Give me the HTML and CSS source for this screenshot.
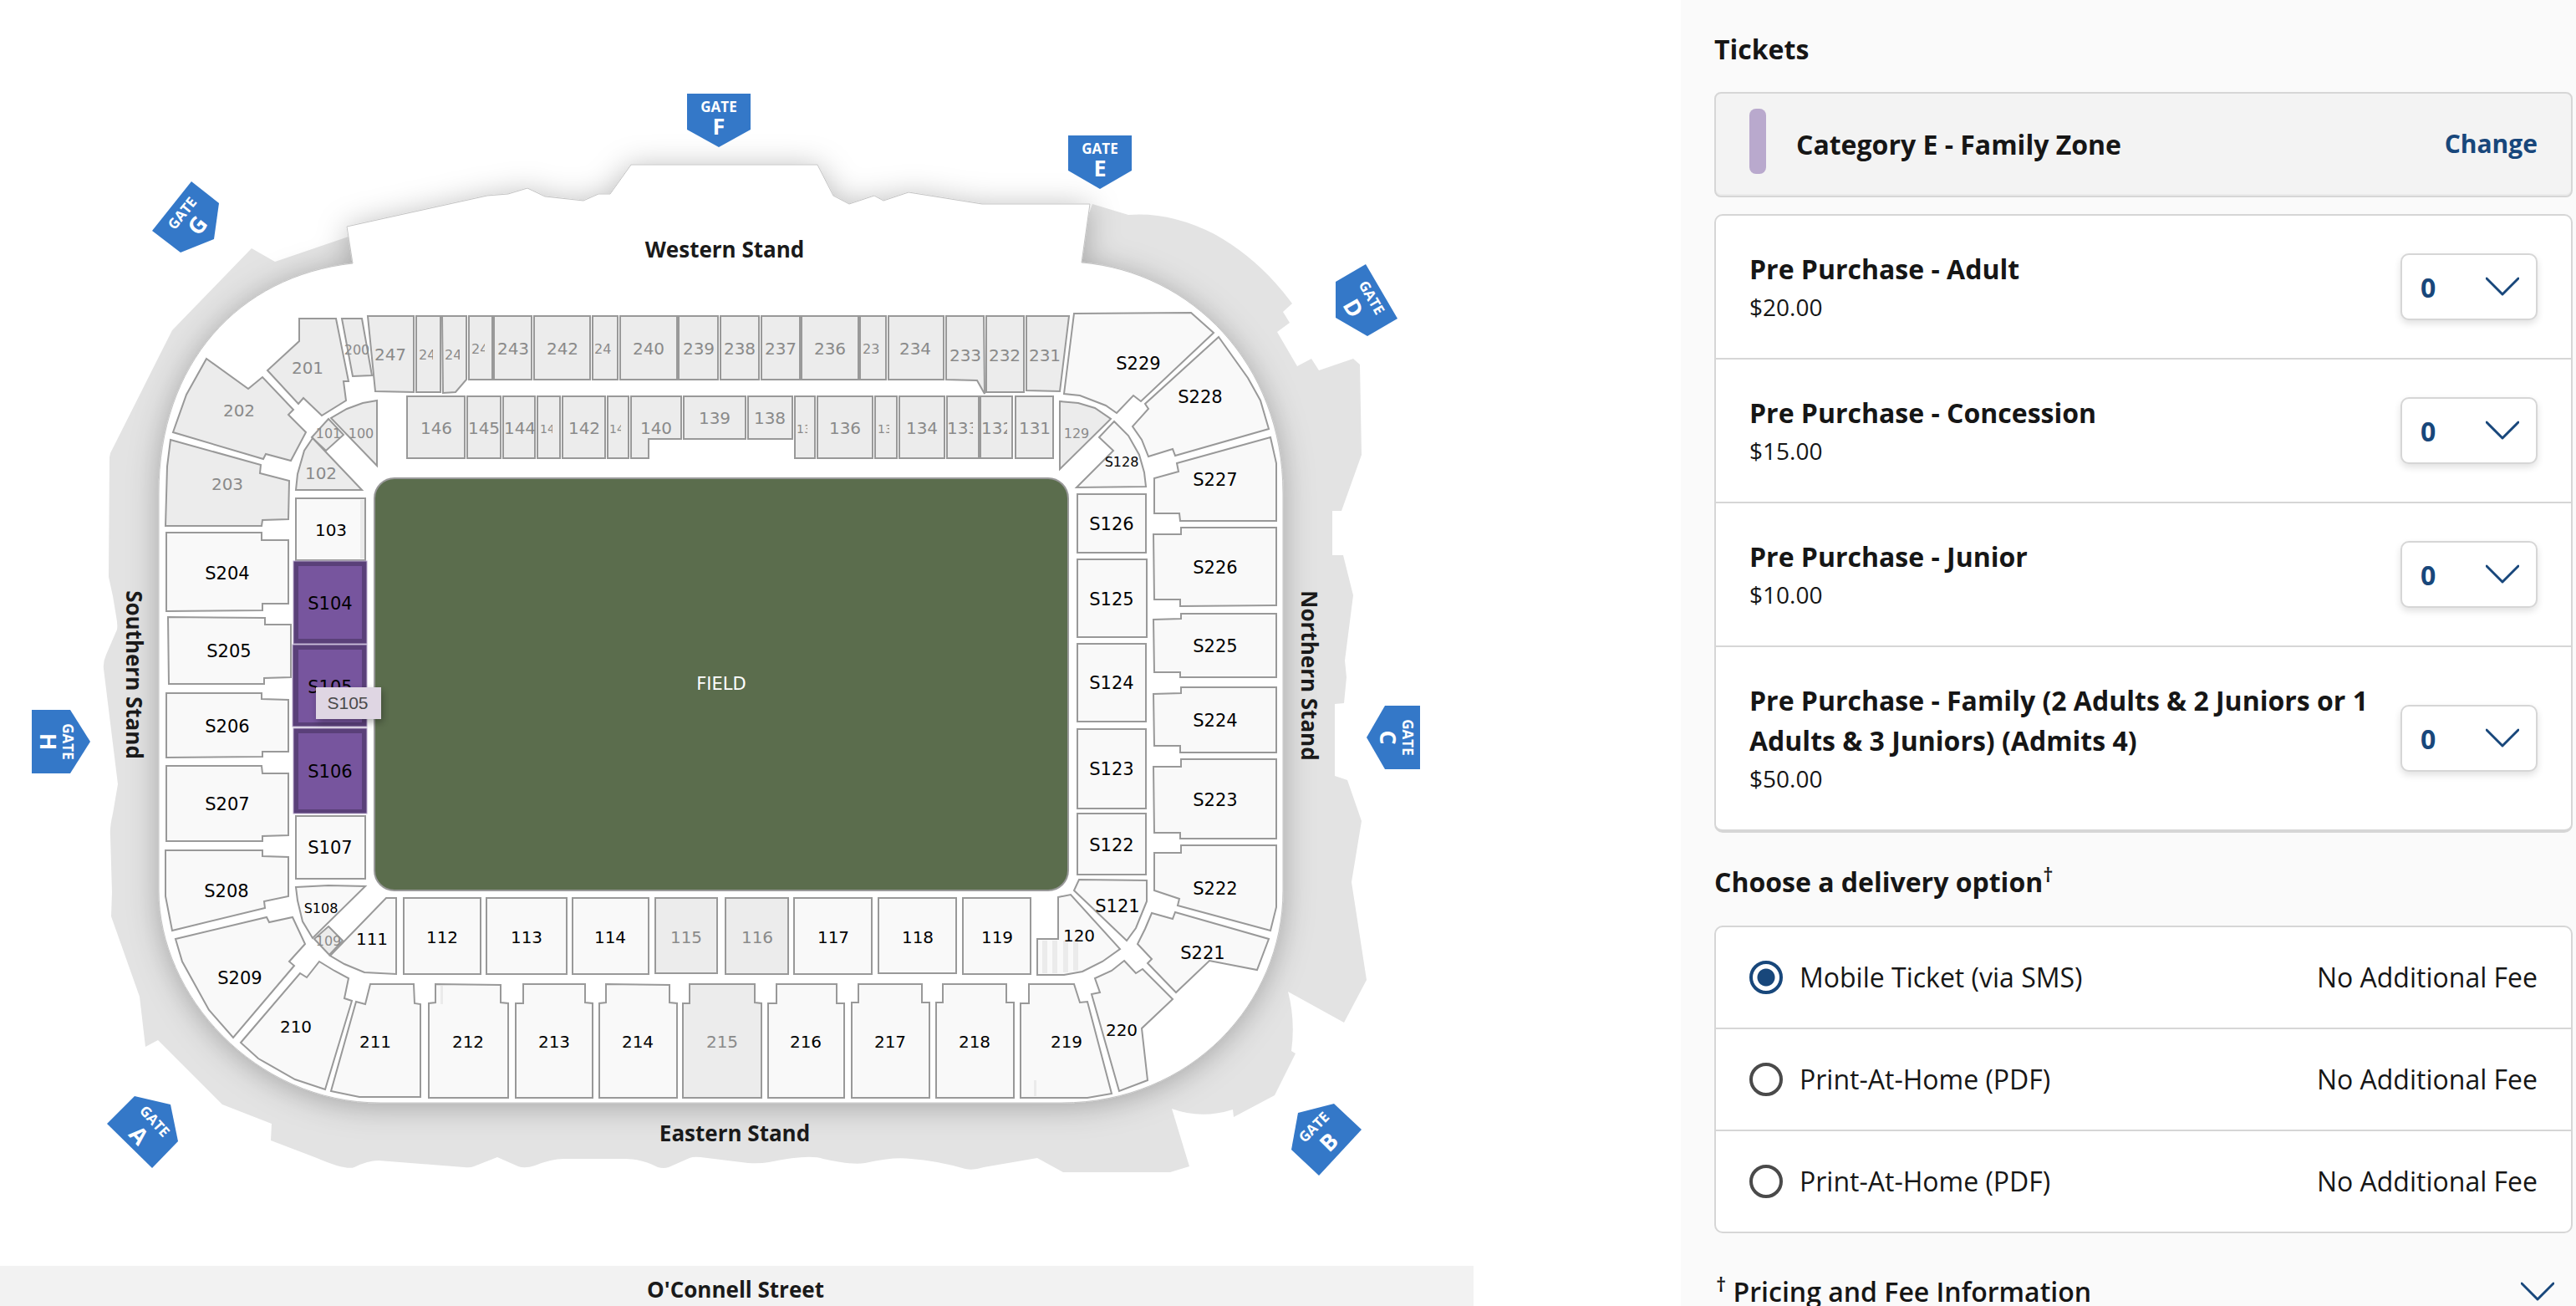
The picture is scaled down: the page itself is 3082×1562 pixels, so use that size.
FILE: index.html
```html
<!DOCTYPE html>
<html lang="en">
<head>
<meta charset="utf-8">
<title>Select tickets</title>
<link rel="stylesheet" href="styles.css">
</head>
<body>
<div class="app">
<main class="map-pane">
<svg class="map" viewBox="0 0 1763 1562" role="img" aria-label="Stadium seating map">
  <defs>
    <filter id="bowl-shadow" x="-10%" y="-10%" width="120%" height="120%">
      <feDropShadow dx="0" dy="4" stdDeviation="18" flood-color="#000" flood-opacity="0.28"/>
    </filter>
    <filter id="tip-shadow" x="-20%" y="-20%" width="150%" height="160%">
      <feDropShadow dx="2" dy="4" stdDeviation="4" flood-color="#000" flood-opacity="0.3"/>
    </filter>
  </defs>

  <!-- street and grounds -->
  <rect class="street" x="0" y="1514" width="1763" height="48"/>
  <path class="grounds" d="M417 283 L329 313 L301 297 L206 395 L132 542 L131 547 L130 690 L135 713 L139 737 Q141 748 140 753 L127 783 Q123 792 124 800 L141 938 L135 973 Q131 990 132 1000 L134 1067 L133 1096 L167 1192 L174 1252 L189 1244 L266 1321 L325 1344 L324 1364 L379 1385 Q414 1400 424 1396 Q440 1388 453 1388 L555 1396 Q563 1397 567 1395 L595 1384 L620 1395 Q628 1398 640 1394 Q660 1386 674 1386 L749 1386 Q768 1386 787 1396 Q794 1398 800 1396 L825 1385 Q830 1383 838 1384 L895 1391 Q909 1392 920 1390 Q968 1380 985 1386 Q1020 1394 1035 1391 Q1070 1383 1090 1386 Q1120 1388 1155 1398 Q1165 1400 1177 1396 L1241 1385 L1272 1402 L1400 1402 L1423 1395 L1402 1326 Q1437 1339 1475 1327 L1476 1336 L1525 1310 L1550 1260 L1545 1257 Q1550 1220 1541 1186 L1608 1223 L1635 1172 L1617 1055 L1629 982 L1612 933 L1597 928 L1597 842 L1608 841 L1611 810 L1609 790 L1619 712 L1607 664 L1594 664 L1594 611 L1605 611 L1629 544 L1627 436 L1619 429 L1578 443 L1569 429 L1552 438 L1528 397 L1543 386 L1535 373 L1546 363 Q1507 310 1453 280 Q1400 253 1350 257 L1307 244 L1250 400 L500 400 Z"/>
  <path class="bowl" filter="url(#bowl-shadow)" d="M415 271 L583 234 L608 232 L631 225 L652 235 L698 240 L716 232 L730 232 L755 197 L978 197 L997 234 L1016 244 L1046 234 L1057 240 L1087 230 L1175 244 L1304 244 L1294 314 C1425 325 1535 435 1535 590 L1535 1065 C1535 1200 1425 1319 1270 1319 L455 1319 C305 1319 190 1190 190 1065 L190 590 C190 435 285 330 422 315 Z"/>

  <!-- field -->
  <rect class="field" x="448" y="572" width="830" height="493" rx="24"/>
  <text class="label field-label" x="863" y="825">FIELD</text>

  <!-- sections that are not on sale -->
  <g class="closed">
    <path d="M204 526 L312 556 L311 566 L346 575 L345 621 L314 622 L313 629 L198 629 L200 558 Z"/>
    <path d="M247 429 L297 465 L314 451 L351 490 L345 496 L366 517 L348 551 L318 543 L315 549 L207 517 L223 472 Z"/>
    <path d="M358 381 L402 381 L417 456 L411 456 L414 479 L385 497 L363 476 L357 483 L320 443 L358 408 Z"/>
    <path d="M409 381 L433 381 L445 449 L422 450 Z"/>
    <path d="M440 378 L495 378 L495 469 L449 468 Z"/>
    <rect x="498" y="378" width="29" height="91"/>
    <path d="M529 378 L558 378 L558 454 L545 469 L530 470 Z"/>
    <rect x="561" y="378" width="28" height="76"/>
    <rect x="591" y="378" width="45" height="76"/>
    <rect x="639" y="378" width="67" height="76"/>
    <rect x="709" y="378" width="30" height="76"/>
    <rect x="742" y="378" width="68" height="76"/>
    <rect x="812" y="378" width="47" height="76"/>
    <rect x="862" y="378" width="46" height="76"/>
    <rect x="911" y="378" width="46" height="76"/>
    <rect x="959" y="378" width="68" height="76"/>
    <rect x="1029" y="378" width="31" height="76"/>
    <rect x="1063" y="378" width="66" height="76"/>
    <path d="M1132 378 L1177 378 L1178 471 L1169 455 L1132 454 Z"/>
    <rect x="1180" y="378" width="45" height="91"/>
    <path d="M1228 378 L1279 378 L1268 468 L1228 467 Z"/>
    <rect x="487" y="474" width="69" height="74"/>
    <rect x="559" y="474" width="40" height="74"/>
    <rect x="602" y="474" width="38" height="74"/>
    <rect x="643" y="474" width="27" height="74"/>
    <rect x="673" y="474" width="51" height="74"/>
    <rect x="727" y="474" width="25" height="74"/>
    <path d="M755 474 L815 474 L815 525 L776 525 L776 548 L755 548 Z"/>
    <rect x="818" y="474" width="74" height="51"/>
    <rect x="895" y="474" width="53" height="51"/>
    <rect x="951" y="474" width="24" height="74"/>
    <rect x="978" y="474" width="66" height="74"/>
    <rect x="1047" y="474" width="26" height="74"/>
    <rect x="1076" y="474" width="54" height="74"/>
    <rect x="1133" y="474" width="38" height="74"/>
    <rect x="1173" y="474" width="38" height="74"/>
    <rect x="1215" y="474" width="45" height="74"/>
    <path d="M451 479 L434 482 L415 489 L396 500 L451 557 Z"/>
    <path d="M393 501 L411 520 L390 539 L373 523 Z"/>
    <path d="M374 524 L433 586 L354 586 L356 567 L364 539 Z"/>
    <path d="M1268 480 L1290 482 L1310 488 L1329 501 L1268 561 Z"/>
    <path d="M393 1108 L410 1125 L394 1142 L376 1123 Z"/>
    <rect x="784" y="1074" width="74" height="90"/>
    <rect x="868" y="1074" width="75" height="91"/>
    <path d="M825 1177 L903 1177 L903 1199 L911 1200 L911 1313 L817 1313 L817 1200 L825 1200 Z"/>
  </g>

  <!-- sections on sale -->
  <g class="open">
    <rect x="354" y="596" width="83" height="74"/>
    <path d="M1285 375 L1425 374 L1452 398 L1365 480 L1356 473 L1336 494 L1323 485 L1292 473 L1273 471 Z"/>
    <path d="M1458 403 L1493 452 L1508 479 L1518 513 L1406 545 L1403 537 L1374 546 L1366 526 L1355 510 L1374 489 L1370 483 Z"/>
    <path d="M1520 523 L1527 554 L1527 623 L1412 623 L1411 614 L1381 614 L1381 572 L1410 564 L1408 554 Z"/>
    <path d="M1527 631 L1413 631 L1413 639 L1380 639 L1381 717 L1412 717 L1412 725 L1527 724 Z"/>
    <path d="M1527 734 L1413 734 L1413 740 L1380 741 L1381 804 L1412 804 L1412 810 L1527 810 Z"/>
    <path d="M1527 822 L1413 822 L1413 829 L1380 830 L1381 892 L1412 892 L1412 900 L1527 900 Z"/>
    <path d="M1527 908 L1413 908 L1413 917 L1380 917 L1381 996 L1412 996 L1412 1003 L1527 1003 Z"/>
    <path d="M1527 1011 L1413 1011 L1413 1020 L1381 1020 L1381 1065 L1411 1075 L1409 1083 L1520 1113 L1527 1085 Z"/>
    <path d="M1378 1092 L1403 1099 L1406 1091 L1518 1123 L1504 1160 L1447 1149 L1407 1187 L1373 1152 L1378 1147 L1361 1129 L1370 1111 Z"/>
    <path d="M1345 1149 L1359 1164 L1367 1159 L1403 1195 L1366 1230 L1373 1292 L1339 1305 L1306 1189 L1316 1187 L1310 1170 L1330 1161 Z"/>
    <path d="M1333 504 L1350 521 L1363 544 L1369 565 L1371 582 L1288 583 L1332 539 L1315 523 Z"/>
    <rect x="1289" y="591" width="82" height="70"/>
    <rect x="1289" y="669" width="83" height="93"/>
    <rect x="1289" y="770" width="82" height="93"/>
    <rect x="1289" y="872" width="82" height="95"/>
    <rect x="1289" y="973" width="82" height="73"/>
    <path d="M1291 1052 L1372 1053 L1372 1078 L1359 1110 L1348 1125 L1285 1065 Z"/>
    <path d="M1266 1073 L1281 1070 L1340 1135 L1319 1150 L1295 1162 L1273 1166 L1241 1166 L1241 1123 L1266 1123 Z"/>
    <path d="M1231 1177 L1285 1177 L1292 1199 L1301 1198 L1330 1308 L1301 1313 L1221 1313 L1221 1200 L1231 1200 Z"/>
    <path d="M1128 1177 L1204 1177 L1204 1199 L1213 1199 L1213 1313 L1120 1313 L1120 1199 L1128 1199 Z"/>
    <path d="M1027 1177 L1103 1177 L1103 1199 L1112 1199 L1112 1313 L1019 1313 L1019 1199 L1027 1199 Z"/>
    <path d="M929 1177 L1001 1177 L1001 1200 L1010 1200 L1010 1313 L919 1313 L919 1200 L929 1200 Z"/>
    <path d="M725 1177 L801 1178 L801 1199 L810 1200 L810 1313 L717 1313 L717 1200 L725 1199 Z"/>
    <path d="M626 1177 L700 1177 L700 1199 L709 1200 L709 1313 L617 1313 L617 1200 L626 1200 Z"/>
    <path d="M521 1177 L599 1178 L599 1199 L608 1200 L608 1313 L513 1313 L513 1200 L521 1199 Z"/>
    <path d="M443 1177 L495 1177 L496 1200 L503 1201 L503 1312 L430 1312 L396 1305 L426 1198 L437 1201 Z"/>
    <path d="M382 1150 L400 1161 L417 1170 L412 1194 L421 1197 L389 1303 L353 1291 L309 1266 L288 1247 L359 1164 L367 1169 Z"/>
    <path d="M210 1123 L319 1097 L322 1103 L350 1097 L365 1129 L346 1150 L352 1155 L279 1241 L250 1208 L218 1150 Z"/>
    <path d="M198 1017 L314 1017 L314 1024 L345 1025 L345 1072 L316 1078 L317 1086 L206 1113 L198 1072 Z"/>
    <path d="M199 637 L313 637 L313 646 L345 646 L345 722 L314 722 L314 730 L199 731 Z"/>
    <path d="M201 738 L317 739 L317 747 L348 747 L348 810 L316 811 L316 818 L202 818 Z"/>
    <path d="M199 829 L313 829 L313 836 L345 837 L345 899 L314 899 L314 905 L199 906 Z"/>
    <path d="M199 916 L313 916 L314 925 L345 925 L345 999 L314 1000 L314 1006 L199 1006 Z"/>
    <rect x="354" y="976" width="83" height="75"/>
    <path d="M354 1061 L393 1059 L437 1060 L374 1122 L362 1102 L356 1077 Z"/>
    <path d="M462 1074 L474 1074 L474 1165 L436 1163 L412 1153 L395 1143 Z"/>
    <rect x="483" y="1074" width="92" height="91"/>
    <rect x="582" y="1074" width="96" height="91"/>
    <rect x="685" y="1074" width="91" height="91"/>
    <rect x="950" y="1074" width="93" height="91"/>
    <rect x="1051" y="1074" width="93" height="90"/>
    <rect x="1152" y="1074" width="81" height="91"/>
  </g>
  <g class="sold">
    <path d="M431 598h5v70h-5z M1247 1125h6v39h-6z M1259 1125h6v39h-6z M1272 1125h6v38h-6z M1284 1125h6v36h-6z M527 1179h3v22h-3z M1237 1292h3v19h-3z"/>
  </g>

  <!-- selected category -->
  <g class="picked">
    <rect class="picked-edge" x="351" y="671" width="88" height="99"/>
    <rect class="picked-edge" x="350" y="771" width="89" height="98"/>
    <rect class="picked-edge" x="351" y="871" width="88" height="102"/>
    <rect x="357" y="677" width="76" height="87"/>
    <rect x="357" y="777" width="76" height="87"/>
    <rect x="357" y="877" width="76" height="91"/>
  </g>

  <g class="label muted">
    <text x="272" y="586">203</text><text x="286" y="498">202</text><text x="368" y="447">201</text>
    <text x="467" y="431">247</text><text x="614" y="424">243</text><text x="673" y="424">242</text>
    <text x="776" y="424">240</text><text x="836" y="424">239</text><text x="885" y="424">238</text>
    <text x="934" y="424">237</text><text x="993" y="424">236</text><text x="1095" y="424">234</text>
    <text x="1155" y="432">233</text><text x="1202" y="432">232</text><text x="1250" y="432">231</text>
    <text x="522" y="519">146</text><text x="579" y="519">145</text><text x="622" y="519">144</text>
    <text x="699" y="519">142</text><text x="785" y="519">140</text><text x="855" y="507">139</text>
    <text x="921" y="507">138</text><text x="1011" y="519">136</text><text x="1103" y="519">134</text>
    <text x="1238" y="519">131</text><text x="384" y="573">102</text><text x="821" y="1128">115</text>
    <text x="906" y="1128">116</text><text x="864" y="1253">215</text>
    <svg x="1133" y="500" width="31" height="24"><text class="clipped" x="0" y="19">133</text></svg>
    <svg x="1174" y="500" width="31" height="24"><text class="clipped" x="0" y="19">132</text></svg>
  </g>
  <g class="label small muted">
    <text x="427" y="424">200</text><text x="432" y="524">100</text><text x="393" y="524">101</text>
    <text x="1288" y="524">129</text><text x="393" y="1131">109</text>
    <svg x="501" y="410" width="17" height="24"><text class="clipped" x="0" y="20">246</text></svg>
    <svg x="532" y="410" width="18" height="24"><text class="clipped" x="0" y="20">245</text></svg>
    <svg x="564" y="403" width="16" height="24"><text class="clipped" x="0" y="20">244</text></svg>
    <svg x="711" y="403" width="20" height="24"><text class="clipped" x="0" y="20">241</text></svg>
    <svg x="1032" y="403" width="20" height="24"><text class="clipped" x="0" y="20">235</text></svg>
  </g>
  <g class="label tiny muted">
    <svg x="646" y="500" width="15" height="24"><text class="clipped" x="0" y="18">143</text></svg>
    <svg x="729" y="500" width="14" height="24"><text class="clipped" x="0" y="18">141</text></svg>
    <svg x="953" y="500" width="13" height="24"><text class="clipped" x="0" y="18">137</text></svg>
    <svg x="1050" y="500" width="14" height="24"><text class="clipped" x="0" y="18">135</text></svg>
  </g>
  <g class="label">
    <text x="396" y="641">103</text><text x="354" y="1235">210</text>
    <text x="449" y="1253">211</text><text x="560" y="1253">212</text><text x="663" y="1253">213</text>
    <text x="763" y="1253">214</text><text x="964" y="1253">216</text><text x="1065" y="1253">217</text>
    <text x="1166" y="1253">218</text><text x="1276" y="1253">219</text><text x="1342" y="1239">220</text>
    <text x="445" y="1130">111</text><text x="529" y="1128">112</text><text x="630" y="1128">113</text>
    <text x="730" y="1128">114</text><text x="997" y="1128">117</text><text x="1098" y="1128">118</text>
    <text x="1193" y="1128">119</text><text x="1291" y="1126">120</text>
  </g>
  <g class="label social">
    <text x="395" y="729">S104</text><text x="395" y="829">S105</text>
    <text x="395" y="930">S106</text><text x="395" y="1021">S107</text><text x="272" y="693">S204</text>
    <text x="274" y="786">S205</text><text x="272" y="876">S206</text><text x="272" y="969">S207</text>
    <text x="271" y="1073">S208</text><text x="287" y="1177">S209</text><text x="1337" y="1091">S121</text>
    <text x="1330" y="1018">S122</text><text x="1330" y="927">S123</text><text x="1330" y="824">S124</text>
    <text x="1330" y="724">S125</text><text x="1330" y="634">S126</text><text x="1439" y="1147">S221</text>
    <text x="1454" y="1070">S222</text><text x="1454" y="964">S223</text><text x="1454" y="869">S224</text>
    <text x="1454" y="780">S225</text><text x="1454" y="686">S226</text><text x="1454" y="581">S227</text>
    <text x="1436" y="482">S228</text><text x="1362" y="442">S229</text>
  </g>
  <g class="label small">
    <text x="1342" y="558">S128</text><text x="384" y="1092">S108</text>
  </g>

  <g class="stand">
    <text x="867" y="308">Western Stand</text>
    <text x="879" y="1365">Eastern Stand</text>
    <text x="880" y="1552">O'Connell Street</text>
    <text transform="translate(151 807) rotate(90)">Southern Stand</text>
    <text transform="translate(1557 808) rotate(90)">Northern Stand</text>
  </g>

  <!-- gates -->
  <g class="gate">
    <path d="M822 112 L898 112 L898 155 L860 176 L822 155 Z"/>
    <text x="860" y="134">GATE</text><text class="gate-letter" x="860" y="161">F</text>
    <path d="M1278 162 L1354 162 L1354 204 L1316 226 L1278 204 Z"/>
    <text x="1316" y="184">GATE</text><text class="gate-letter" x="1316" y="211">E</text>
    <path d="M1634 316 L1672 381 L1636 402 L1598 380 L1598 337 Z"/>
    <g transform="translate(1641 356) rotate(60)"><text y="6">GATE</text><text class="gate-letter" y="35">D</text></g>
    <path d="M1657 844 L1699 844 L1699 920 L1657 920 L1635 882 Z"/>
    <g transform="translate(1684 882) rotate(90)"><text y="6">GATE</text><text class="gate-letter" y="33">C</text></g>
    <path d="M1596 1320 L1629 1351 L1578 1406 L1545 1375 L1553 1331 Z"/>
    <g transform="translate(1572 1348) rotate(-45)"><text y="6">GATE</text><text class="gate-letter" y="35">B</text></g>
    <path d="M161 1311 L204 1321 L213 1365 L182 1397 L128 1344 Z"/>
    <g transform="translate(185 1341) rotate(48)"><text y="6">GATE</text><text class="gate-letter" y="35">A</text></g>
    <path d="M38 849 L84 849 L108 887 L84 925 L38 925 Z"/>
    <g transform="translate(81 887) rotate(90)"><text y="6">GATE</text><text class="gate-letter" y="33">H</text></g>
    <path d="M229 217 L262 243 L256 286 L216 302 L182 276 Z"/>
    <g transform="translate(218 255) rotate(-51)"><text y="6">GATE</text><text class="gate-letter" y="33">G</text></g>
  </g>

  <!-- hover tip for the section under the pointer -->
  <g class="tip">
    <rect x="378" y="822" width="78" height="38" filter="url(#tip-shadow)"/>
    <text x="416" y="848">S105</text>
  </g>
</svg>
</main>

<aside class="panel">
  <h2 class="heading">Tickets</h2>
  <div class="category">
    <span class="swatch"></span>
    <span class="category-name">Category E - Family Zone</span>
    <a class="change" href="#">Change</a>
  </div>

  <ul class="card tickets">
    <li class="ticket">
      <div class="ticket-info"><label class="ticket-name" for="q-adult">Pre Purchase - Adult</label><span class="price">$20.00</span></div>
      <div class="picker"><select id="q-adult"><option>0</option><option>1</option><option>2</option></select><svg class="chevron" viewBox="0 0 40 24"><path d="M1 2 L20 21 L39 2"/></svg></div>
    </li>
    <li class="ticket">
      <div class="ticket-info"><label class="ticket-name" for="q-conc">Pre Purchase - Concession</label><span class="price">$15.00</span></div>
      <div class="picker"><select id="q-conc"><option>0</option><option>1</option><option>2</option></select><svg class="chevron" viewBox="0 0 40 24"><path d="M1 2 L20 21 L39 2"/></svg></div>
    </li>
    <li class="ticket">
      <div class="ticket-info"><label class="ticket-name" for="q-junior">Pre Purchase - Junior</label><span class="price">$10.00</span></div>
      <div class="picker"><select id="q-junior"><option>0</option><option>1</option><option>2</option></select><svg class="chevron" viewBox="0 0 40 24"><path d="M1 2 L20 21 L39 2"/></svg></div>
    </li>
    <li class="ticket">
      <div class="ticket-info"><label class="ticket-name" for="q-family">Pre Purchase - Family (2 Adults &amp; 2 Juniors or 1 Adults &amp; 3 Juniors) (Admits 4)</label><span class="price">$50.00</span></div>
      <div class="picker"><select id="q-family"><option>0</option><option>1</option><option>2</option></select><svg class="chevron" viewBox="0 0 40 24"><path d="M1 2 L20 21 L39 2"/></svg></div>
    </li>
  </ul>

  <h2 class="heading heading-delivery">Choose a delivery option<sup>†</sup></h2>
  <div class="card delivery">
    <label class="option"><input type="radio" name="delivery" checked><span>Mobile Ticket (via SMS)</span><span class="fee">No Additional Fee</span></label>
    <label class="option"><input type="radio" name="delivery"><span>Print-At-Home (PDF)</span><span class="fee">No Additional Fee</span></label>
    <label class="option"><input type="radio" name="delivery"><span>Print-At-Home (PDF)</span><span class="fee">No Additional Fee</span></label>
  </div>

  <button class="pricing" type="button"><span><sup>†</sup> Pricing and Fee Information</span><svg class="chevron" viewBox="0 0 40 24"><path d="M1 2 L20 21 L39 2"/></svg></button>
</aside>
</div>
</body>
</html>
```
FILE: styles.css
```css
* { box-sizing: border-box; }

body {
  margin: 0;
  background: #fff;
  color: #161616;
  font-family: "Open Sans", "Noto Sans", sans-serif;
  font-size: 32px;
  line-height: 48px;
}

.app {
  display: grid;
  grid-template-columns: minmax(0, 1fr) 1071px;
  height: 100vh;
  overflow: hidden;
}

/* ---------- seating map ---------- */
.map { display: block; width: 100%; max-width: 1763px; }
.street { fill: #f2f2f2; }
.grounds { fill: #e3e3e3; }
.bowl { fill: #fff; stroke: #c4c4c4; stroke-width: 1px; }
.field { fill: #5b6d4d; stroke: #999; stroke-width: 2px; }
.open { fill: #f9f9f9; stroke: #999; stroke-width: 2px; }
.closed { fill: #ececec; stroke: #999; stroke-width: 2px; }
.sold { fill: #ebebeb; }
.picked { fill: #77559e; }
.picked-edge { fill: #5a4079; stroke: #b9a9cd; stroke-width: 1px; }

.label {
  font-family: "DejaVu Sans", sans-serif;
  font-size: 20px;
  fill: #000;
  text-anchor: middle;
}
.social { font-size: 21px; }
.small { font-size: 16px; }
.tiny { font-size: 14px; }
.muted { fill: #8a8a8a; }
.clipped { text-anchor: start; }
.field-label { fill: #fff; font-size: 21px; }

.stand {
  font-size: 26px;
  font-weight: 700;
  fill: #1a1a1a;
  text-anchor: middle;
}

.gate {
  font-size: 17px;
  font-weight: 700;
  text-anchor: middle;
  fill: #fff;
}
.gate path { fill: #3478c8; }
.gate-letter { font-size: 27px; }

.tip { font-family: "Liberation Sans", sans-serif; font-size: 21px; text-anchor: middle; fill: #4a4a4a; }
.tip rect { fill: #dfd6e3; }

/* ---------- ticket panel ---------- */
.panel {
  background: #fafafa;
  padding: 35px 4px 0 40px;
}

.heading {
  margin: 0 0 27px;
  font-size: 32px;
  line-height: 48px;
  font-weight: 700;
}
.heading-delivery { margin: 35px 0 28px; }

sup {
  font-size: 24px;
  font-weight: 600;
  line-height: 0;
  vertical-align: super;
}

.category {
  display: flex;
  align-items: center;
  height: 126px;
  margin-bottom: 20px;
  padding: 0 40px;
  background: #f3f3f3;
  border: 2px solid #d6d6d6;
  border-radius: 8px;
  box-shadow: inset 0 -2px 0 #ebebeb;
}
.swatch {
  width: 20px;
  height: 78px;
  margin: 0 36px 8px 0;
  border-radius: 8px;
  background: #b9a9cd;
}
.category-name { font-weight: 700; }
.change {
  margin: 0 0 2px auto;
  color: #18477b;
  font-weight: 700;
  font-size: 30px;
  text-decoration: none;
}

.card {
  margin: 0;
  padding: 0;
  list-style: none;
  background: #fff;
  border: 2px solid #d6d6d6;
  border-radius: 10px;
}
.tickets { border-bottom-width: 4px; }

.ticket {
  display: flex;
  align-items: center;
  gap: 24px;
  padding: 40px;
}
.ticket + .ticket, .option + .option { border-top: 2px solid #d6d6d6; }
.ticket-info { flex: 1; }
.ticket-name { display: block; font-weight: 700; }
.price { display: block; font-size: 28px; line-height: 42px; }

.picker {
  display: grid;
  align-items: center;
  width: 164px;
  height: 80px;
}
.picker select, .picker .chevron { grid-area: 1 / 1; }
.picker select {
  appearance: none;
  width: 100%;
  height: 80px;
  padding: 0 22px;
  border: 2px solid #d6d6d6;
  border-radius: 10px;
  background: #fff;
  box-shadow: 0 4px 8px rgba(0, 0, 0, 0.12);
  color: #18477b;
  font: 700 32px "Open Sans", "Noto Sans", sans-serif;
}
.picker .chevron { justify-self: end; margin-right: 22px; pointer-events: none; }

.chevron {
  width: 40px;
  height: 24px;
  fill: none;
  stroke: #18477b;
  stroke-width: 3px;
  stroke-linecap: round;
  stroke-linejoin: round;
}

.option {
  display: flex;
  align-items: center;
  min-height: 120px;
  padding: 0 40px;
}
.option + .option { min-height: 122px; }
.option input {
  appearance: none;
  width: 40px;
  height: 40px;
  margin: 0 20px 0 0;
  border: 4px solid #4a4a4a;
  border-radius: 50%;
  background: #fff;
}
.option input:checked {
  border-color: #18477b;
  background: radial-gradient(circle, #18477b 10px, #fff 11px);
}
.fee { margin-left: auto; }

.pricing {
  display: flex;
  align-items: center;
  justify-content: space-between;
  width: 100%;
  margin-top: 46px;
  padding: 0 22px 0 2px;
  border: 0;
  background: none;
  color: inherit;
  font: 600 32px/48px "Open Sans", "Noto Sans", sans-serif;
}
```
